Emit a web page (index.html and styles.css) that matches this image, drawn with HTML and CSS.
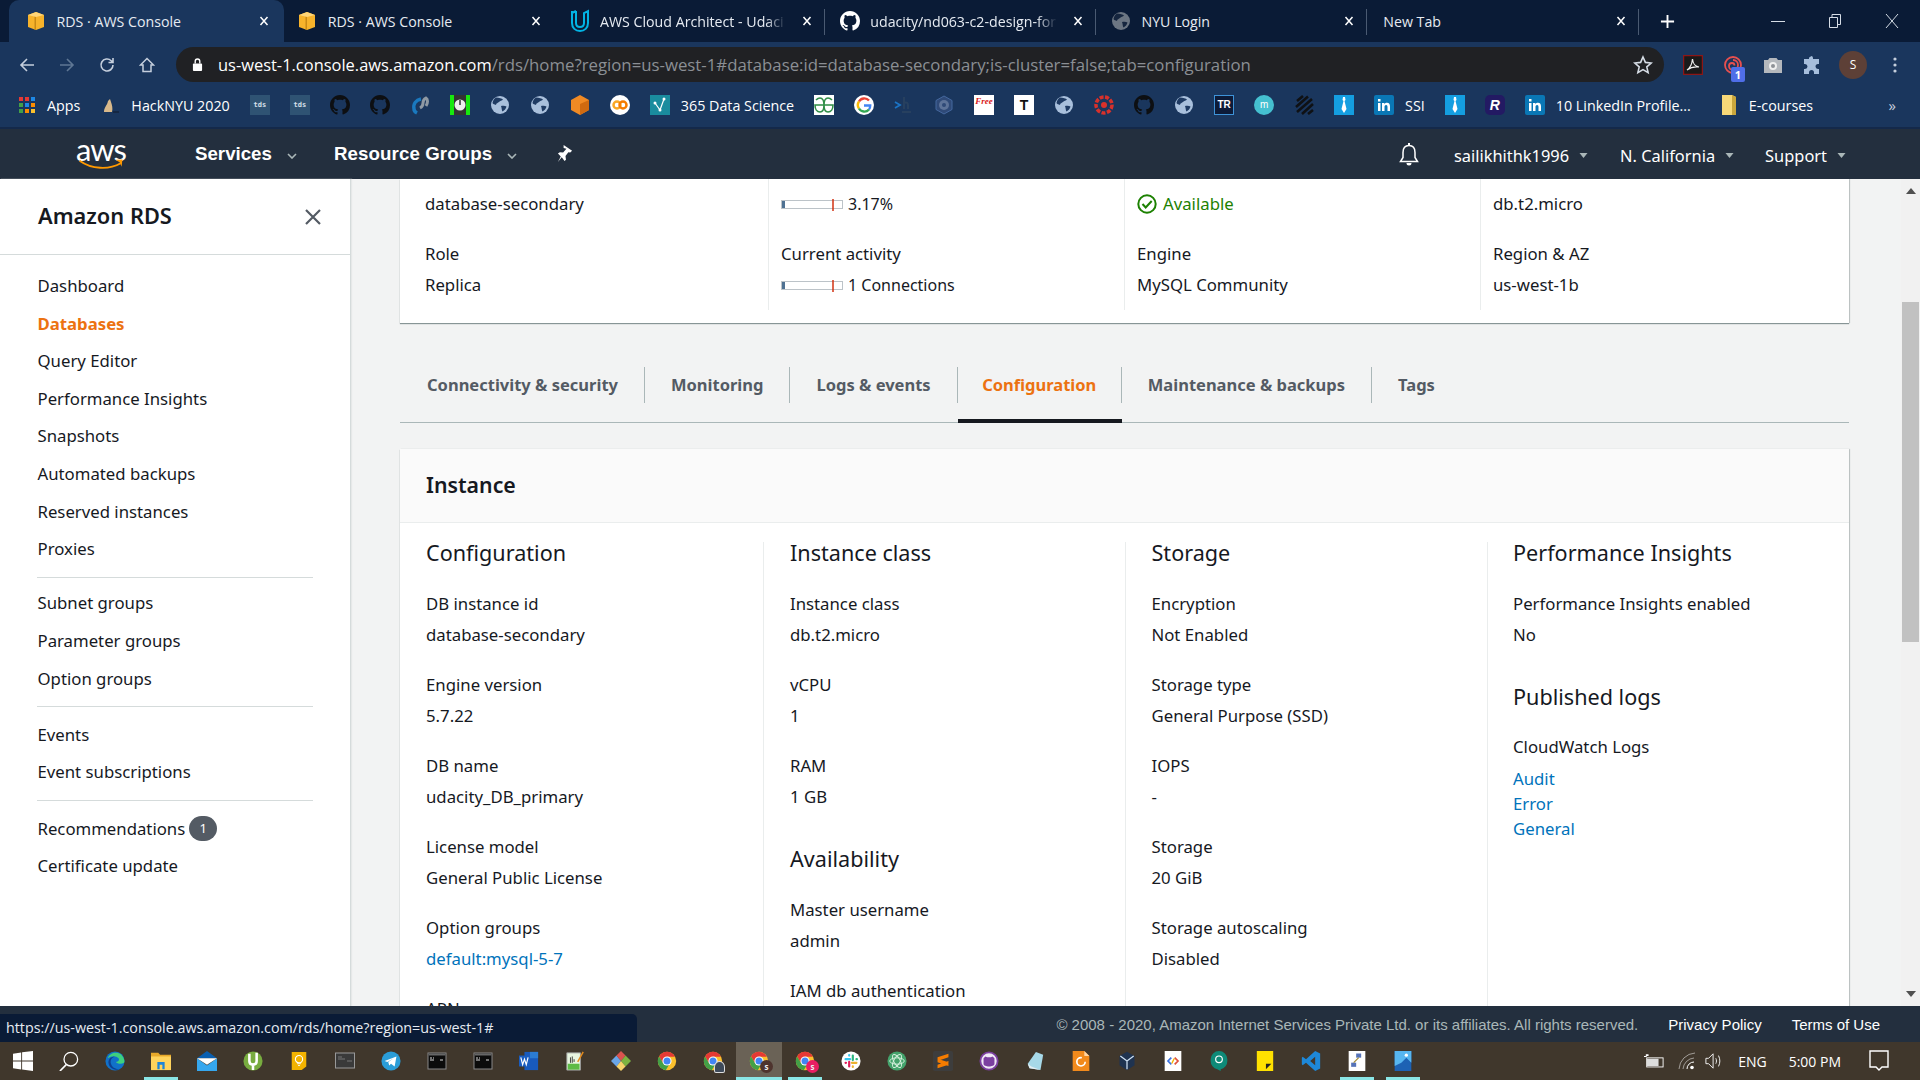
FILE: index.html
```html
<!DOCTYPE html>
<html lang="en">
<head>
<meta charset="utf-8">
<title>RDS · AWS Console</title>
<link rel="stylesheet" href="styles.css">
</head>
<body>
<svg class="defs" xmlns="http://www.w3.org/2000/svg">
  <symbol id="cube" viewBox="0 0 20 20"><path fill="#f7b32b" d="M10 1l8 3v12l-8 3-8-3V4z"/><path fill="#c98a16" d="M10 5v14l-1.500-.5V5z"/><path fill="#ffd577" d="M2 4l8-3 8 3-8 2z"/></symbol>
  <symbol id="udacity" viewBox="0 0 20 24"><path fill="none" stroke="#02b3e4" stroke-width="2" d="M2 2v12c0 5 3.500 8 8 8s8-3 8-8V2l-4 2v10c0 3-1.500 4-4 4M6 2l-4 2M6 2v12c0 2.500 1.500 4 4 4"/></symbol>
  <symbol id="gh" viewBox="0 0 16 16"><path d="M8 0C3.580 0 0 3.580 0 8c0 3.540 2.290 6.530 5.470 7.590.4.070.55-.17.55-.38 0-.19-.01-.82-.01-1.490-2.010.37-2.530-.49-2.690-.94-.09-.23-.48-.94-.82-1.130-.28-.15-.68-.52-.01-.53.63-.01 1.080.58 1.230.82.72 1.210 1.870.87 2.330.66.070-.52.28-.87.51-1.070-1.780-.2-3.640-.89-3.640-3.950 0-.87.31-1.590.82-2.150-.08-.2-.36-1.020.08-2.120 0 0 .67-.21 2.200.82.64-.18 1.320-.27 2-.27.68 0 1.360.09 2 .27 1.530-1.040 2.200-.82 2.200-.82.44 1.100.16 1.920.08 2.120.51.56.82 1.270.82 2.150 0 3.070-1.870 3.750-3.650 3.950.29.25.54.73.54 1.480 0 1.070-.01 1.930-.01 2.200 0 .21.15.46.55.38A8.013 8.013 0 0016 8c0-4.420-3.580-8-8-8z"/></symbol>
  <symbol id="globe" viewBox="0 0 20 20"><circle cx="10" cy="10" r="9" fill="#a9c0dc"/><path fill="#1f3b63" d="M6 2.500c3 .5 6 .5 7 2-1 1.500-3 1-4 2.500-1 1-3 1-3 3-1.500-.5-3-1-3.500-2 .5-2.500 1.500-4.500 3.500-5.500zM11 11c2-.5 4-.5 5.500.5-.5 2-2 4-4 5-1-1-.5-3-1.500-5.500z"/></symbol>
  <symbol id="globe-dim" viewBox="0 0 20 20"><circle cx="10" cy="10" r="9" fill="#6c7683"/><path fill="#16263f" d="M6 2.500c3 .5 6 .5 7 2-1 1.500-3 1-4 2.500-1 1-3 1-3 3-1.500-.5-3-1-3.500-2 .5-2.500 1.500-4.500 3.500-5.500zM11 11c2-.5 4-.5 5.500.5-.5 2-2 4-4 5-1-1-.5-3-1.500-5.500z"/></symbol>
  <symbol id="chrome" viewBox="0 0 24 24"><circle cx="12" cy="12" r="11" fill="#fbc02d"/><path fill="#e53935" d="M12 1a11 11 0 00-9.500 5.500L7 14l5-7h9.500A11 11 0 0012 1z"/><path fill="#43a047" d="M2.500 6.500A11 11 0 0010.500 23l4.500-7.500L7 14z"/><circle cx="12" cy="12" r="5.500" fill="#fff"/><circle cx="12" cy="12" r="4.200" fill="#4285f4"/></symbol>
  <symbol id="cmd" viewBox="0 0 20 20"><rect x="1" y="2" width="18" height="16" fill="#0b0b0b" stroke="#888" stroke-width="1"/><rect x="1.500" y="2.500" width="17" height="2" fill="#666"/><path stroke="#ddd" stroke-width="1" d="M3 7h2M6 7h1M3 9h4M13 9h3"/></symbol>
  <symbol id="inbox" viewBox="0 0 20 20"><rect x="0" y="0" width="20" height="20" rx="2" fill="#0a77b5"/><path fill="#fff" d="M4 8h2.500v8H4zM4 4h2.500v2.500H4zM8 8h2.400v1.200c.6-.9 1.500-1.400 2.600-1.400 2.200 0 3 1.500 3 3.600V16h-2.500v-4c0-1.200-.4-2-1.400-2s-1.600.8-1.600 2v4H8z"/></symbol>
  <symbol id="tie" viewBox="0 0 20 20"><rect width="20" height="20" fill="#149ee0"/><path fill="#fff" d="M9 2h2l.5 3-1 1 2 8-2.500 4-2.500-4 2-8-1-1z"/></symbol>
  <symbol id="chev" viewBox="0 0 10 6"><path fill="none" stroke="currentColor" stroke-width="1.600" d="M1 1l4 4 4-4"/></symbol>
  <symbol id="tri" viewBox="0 0 8 5"><path fill="currentColor" d="M0 0h8L4 5z"/></symbol>
  <symbol id="x" viewBox="0 0 10 10"><path fill="none" stroke="#fff" stroke-width="1.500" d="M1.500 1l7 8M8.500 1l-7 8"/></symbol>
</svg>

<div class="page">
  <div class="tabstrip">
    <div class="tab tab-active"><svg class="tab-ico"><use href="#cube"/></svg><span class="tab-title">RDS · AWS Console</span><svg class="tab-x"><use href="#x"/></svg></div>
    <div class="tab"><svg class="tab-ico"><use href="#cube"/></svg><span class="tab-title">RDS · AWS Console</span><svg class="tab-x"><use href="#x"/></svg></div>
    <div class="tab"><svg class="tab-ico tab-ico-u"><use href="#udacity"/></svg><span class="tab-title tab-fade">AWS Cloud Architect - Udaci</span><svg class="tab-x"><use href="#x"/></svg></div>
    <div class="tab"><svg class="tab-ico ico-white"><use href="#gh"/></svg><span class="tab-title tab-fade">udacity/nd063-c2-design-for</span><svg class="tab-x"><use href="#x"/></svg></div>
    <div class="tab"><svg class="tab-ico"><use href="#globe-dim"/></svg><span class="tab-title">NYU Login</span><svg class="tab-x"><use href="#x"/></svg></div>
    <div class="tab tab-plain"><span class="tab-title">New Tab</span><svg class="tab-x"><use href="#x"/></svg></div>
    <svg class="newtab" viewBox="0 0 16 16"><path stroke="#fff" stroke-width="2" d="M8 1v14M1 8h14"/></svg>
    <div class="winbtns">
      <svg viewBox="0 0 14 14"><path stroke="#d6dde6" stroke-width="1" d="M0 7.500h14"/></svg>
      <svg viewBox="0 0 14 14"><path fill="none" stroke="#d6dde6" stroke-width="1" d="M1.500 3.500h8v10h-8zM4 3.500V.5h8.500v10h-3"/></svg>
      <svg viewBox="0 0 14 14"><path stroke="#d6dde6" stroke-width="1" d="M1 0l12 14M13 0L1 14"/></svg>
    </div>
  </div>

  <div class="toolbar">
    <div class="navbtns">
      <svg viewBox="0 0 16 16"><path fill="none" stroke="#c5cfdd" stroke-width="1.600" d="M15 8H2M8 2L2 8l6 6"/></svg>
      <svg viewBox="0 0 16 16"><path fill="none" stroke="#5f7794" stroke-width="1.600" d="M1 8h13M8 2l6 6-6 6"/></svg>
      <svg viewBox="0 0 16 16"><path fill="none" stroke="#c5cfdd" stroke-width="1.600" d="M14 8a6 6 0 11-1.800-4.300L14 5.500M14 1v4.500H9.500"/></svg>
      <svg viewBox="0 0 16 16"><path fill="none" stroke="#c5cfdd" stroke-width="1.500" d="M8 1.500L1.500 8H4v6.500h8V8h2.500z"/></svg>
    </div>
    <div class="omnibox">
      <svg class="lock" viewBox="0 0 12 16"><path fill="#fff" d="M2 7h8a1 1 0 011 1v6a1 1 0 01-1 1H2a1 1 0 01-1-1V8a1 1 0 011-1z"/><path fill="none" stroke="#fff" stroke-width="1.500" d="M3.500 7V4.500a2.500 2.500 0 015 0V7"/></svg>
      <span class="url"><span class="url-host">us-west-1.console.aws.amazon.com</span>/rds/home?region=us-west-1#database:id=database-secondary;is-cluster=false;tab=configuration</span>
      <svg class="star" viewBox="0 0 20 20"><path fill="none" stroke="#d6dde6" stroke-width="1.600" d="M10 2l2.400 5.400 5.800.6-4.400 3.900 1.300 5.700L10 14.600l-5.100 3 1.300-5.700L1.800 8l5.800-.6z"/></svg>
    </div>
    <div class="exts">
      <svg class="ext" viewBox="0 0 20 20"><rect x=".5" y=".5" width="19" height="19" fill="#1a1a1a" stroke="#8c1616" stroke-width="1.500"/><path fill="none" stroke="#f0f0f0" stroke-width="1.200" d="M4 15c3-2 5-6 5.500-11 .5 5 2 7 6.500 8-4-.5-8 0-12 3z"/></svg>
      <span class="ext ext-swirl"><svg viewBox="0 0 20 20"><g fill="none" stroke="#e8504f" stroke-width="1.800"><circle cx="10" cy="10" r="8"/><path d="M10 5a5 5 0 015 5c0 3-2 5-5 5a4 4 0 01-4-4c0-2 1.500-3 3-3s2.500 1 2.500 2.500"/></g></svg><span class="ext-badge">1</span></span>
      <svg class="ext" viewBox="0 0 20 20"><path fill="#b4b8bd" d="M1 5h4l1.500-2h7L15 5h4v13H1z"/><circle cx="10" cy="11" r="4" fill="#efefef"/><circle cx="10" cy="11" r="2" fill="#8e9297"/></svg>
      <svg class="ext" viewBox="0 0 20 20"><path fill="#a6bedc" d="M8 1a2 2 0 012 2v1h6v5h-1a2.500 2.500 0 000 5h1v5h-5v-1.500a2.500 2.500 0 00-5 0V19H1v-5h1a2.500 2.500 0 000-5H1V4h5V3a2 2 0 012-1.500z"/></svg>
      <span class="avatar">S</span>
      <svg class="dots" viewBox="0 0 4 16"><circle cx="2" cy="2" r="1.600" fill="#c5cfdd"/><circle cx="2" cy="8" r="1.600" fill="#c5cfdd"/><circle cx="2" cy="14" r="1.600" fill="#c5cfdd"/></svg>
    </div>
  </div>

  <div class="bookmarks">
    <div class="bm bm-apps"><svg class="bm-ico" viewBox="0 0 18 18"><g fill="#e53935"><rect x="1" y="1" width="4" height="4"/><rect x="7" y="1" width="4" height="4"/></g><rect x="13" y="1" width="4" height="4" fill="#1e88e5"/><rect x="1" y="7" width="4" height="4" fill="#43a047"/><rect x="7" y="7" width="4" height="4" fill="#1e88e5"/><rect x="13" y="7" width="4" height="4" fill="#fb8c00"/><rect x="1" y="13" width="4" height="4" fill="#43a047"/><rect x="7" y="13" width="4" height="4" fill="#fb8c00"/><rect x="13" y="13" width="4" height="4" fill="#fbc02d"/></svg><span>Apps</span></div>
    <div class="bm"><svg class="bm-ico" viewBox="0 0 20 20"><path fill="#d9b98a" d="M4 17c0-5 3-6 4-11l2-2 1 3c1 3 2 6 1 10z"/><path stroke="#14233b" stroke-width="1.500" d="M13 17h6"/></svg><span>HackNYU 2020</span></div>
    <div class="bm"><span class="tds">tds</span></div>
    <div class="bm"><span class="tds">tds</span></div>
    <div class="bm"><svg class="bm-ico ico-black"><use href="#gh"/></svg></div>
    <div class="bm"><svg class="bm-ico ico-black"><use href="#gh"/></svg></div>
    <div class="bm"><svg class="bm-ico" viewBox="0 0 20 20"><path fill="none" stroke="#1a79bf" stroke-width="3.500" d="M11 4c-5 1-8 5-7 10 0 2 1 3 3 4"/><path fill="none" stroke="#8f99a3" stroke-width="3" d="M10 13c2-1 3-2 3-5 0-2 1-4 3-5 2 1 2 5 0 8"/></svg></div>
    <div class="bm"><svg class="bm-ico" viewBox="0 0 20 20"><rect width="20" height="20" fill="#17e80f"/><rect x="4" width="12" height="20" fill="#333"/><circle cx="10" cy="10" r="5.500" fill="#eee"/><path stroke="#333" stroke-width="1.500" d="M10 5v5"/></svg></div>
    <div class="bm"><svg class="bm-ico"><use href="#globe"/></svg></div>
    <div class="bm"><svg class="bm-ico"><use href="#globe"/></svg></div>
    <div class="bm"><svg class="bm-ico" viewBox="0 0 20 20"><path fill="#f08a24" d="M10 0l9 5v10l-9 5-9-5V5z"/><path fill="#d06a10" d="M10 9v11l9-5V5z"/></svg></div>
    <div class="bm"><svg class="bm-ico" viewBox="0 0 20 20"><circle cx="10" cy="10" r="10" fill="#fff"/><circle cx="7" cy="10" r="3.500" fill="none" stroke="#f9a825" stroke-width="2.500"/><circle cx="13" cy="10" r="3.500" fill="none" stroke="#f57c00" stroke-width="2.500"/></svg></div>
    <div class="bm"><svg class="bm-ico" viewBox="0 0 20 20"><rect width="20" height="20" fill="#1a8c9e"/><path fill="none" stroke="#fff" stroke-width="1.200" d="M5 8l5 7 4-11"/><circle cx="5" cy="8" r="1.500" fill="#fff"/><circle cx="10" cy="15" r="1.500" fill="#fff"/><circle cx="14" cy="4" r="1.500" fill="#fff"/></svg><span>365 Data Science</span></div>
    <div class="bm"><svg class="bm-ico" viewBox="0 0 20 20"><rect width="20" height="20" fill="#fff"/><g fill="none" stroke="#2f8d46" stroke-width="1.600"><path d="M10 10h9c0 4-2 7-5 7-2.500 0-4-3-4-7zM10 10H1c0 4 2 7 5 7 2.500 0 4-3 4-7z"/><path d="M10 10c0-4 1.500-7 4-7 2 0 3 1 4 2M10 10c0-4-1.500-7-4-7-2 0-3 1-4 2"/></g></svg></div>
    <div class="bm"><svg class="bm-ico" viewBox="0 0 20 20"><circle cx="10" cy="10" r="10" fill="#fff"/><path fill="none" stroke="#ea4335" stroke-width="2.400" d="M15 5.500A6.200 6.200 0 005 6.500"/><path fill="none" stroke="#fbbc05" stroke-width="2.400" d="M5 6.500a6.200 6.200 0 000 7"/><path fill="none" stroke="#34a853" stroke-width="2.400" d="M5 13.500a6.200 6.200 0 0010 1"/><path fill="none" stroke="#4285f4" stroke-width="2.400" d="M15 14.500c1-1 1.200-2.500 1.200-4H10"/></svg></div>
    <div class="bm"><svg class="bm-ico" viewBox="0 0 20 20"><path fill="none" stroke="#1b74c5" stroke-width="1.800" d="M1 7l5 3-5 3"/><path fill="none" stroke="#27405f" stroke-width="2" d="M10 2v12M10 8c3-1 4 0 4 2v4M8 17h9"/></svg></div>
    <div class="bm"><svg class="bm-ico" viewBox="0 0 20 20"><path fill="#2f4a78" stroke="#45689f" d="M10 1l8 4.500v9L10 19l-8-4.500v-9z"/><circle cx="10" cy="10" r="5" fill="#5d7399"/><circle cx="10" cy="10" r="2" fill="#2f4a78"/></svg></div>
    <div class="bm"><span class="free">Free</span></div>
    <div class="bm"><span class="tee">T</span></div>
    <div class="bm"><svg class="bm-ico"><use href="#globe"/></svg></div>
    <div class="bm"><svg class="bm-ico" viewBox="0 0 20 20"><circle cx="10" cy="10" r="8" fill="none" stroke="#d9312b" stroke-width="3.500" stroke-dasharray="4 1.500"/><circle cx="10" cy="10" r="3" fill="#d9312b"/></svg></div>
    <div class="bm"><svg class="bm-ico ico-black"><use href="#gh"/></svg></div>
    <div class="bm"><svg class="bm-ico"><use href="#globe"/></svg></div>
    <div class="bm"><span class="tr">TR</span></div>
    <div class="bm"><span class="mm">m</span></div>
    <div class="bm"><svg class="bm-ico" viewBox="0 0 20 20"><g stroke="#0f1114" stroke-width="2.600"><path d="M3 6l6-5M2 12L14 1.500M3 17L18 4M8 19l11-10M14 19l5-4"/></g></svg></div>
    <div class="bm"><svg class="bm-ico"><use href="#tie"/></svg></div>
    <div class="bm"><svg class="bm-ico"><use href="#inbox"/></svg><span>SSI</span></div>
    <div class="bm"><svg class="bm-ico"><use href="#tie"/></svg></div>
    <div class="bm"><span class="rr">R</span></div>
    <div class="bm"><svg class="bm-ico"><use href="#inbox"/></svg><span>10 LinkedIn Profile...</span></div>
    <div class="bm bm-folder"><svg class="bm-ico" viewBox="0 0 16 20"><path fill="#f6d878" d="M1 0h10l4 2v18H1z"/><path fill="#c9a63c" d="M11 0v20h4V2z"/></svg><span>E-courses</span></div>
    <span class="bm-more">»</span>
  </div>

  <nav class="awsnav">
    <div class="aws-logo"><span class="aws-word">aws</span><svg class="aws-smile" viewBox="0 0 52 14"><path fill="none" stroke="#f90" stroke-width="2.200" d="M1 2c14 10 34 11 48 3"/><path fill="#f90" d="M43 1l8-.5L50 9l-2-5z"/></svg></div>
    <span class="nav-main">Services</span><svg class="nav-chev"><use href="#chev"/></svg>
    <span class="nav-main nav-rg">Resource Groups</span><svg class="nav-chev"><use href="#chev"/></svg>
    <svg class="pin" viewBox="0 0 18 20"><path fill="#fff" d="M7 0l9 6-2 2-2-.5-3 4 .5 4L8 17l-3-4-4 5 3-6-3-3 2-1.500 3.500.5L10 4 7 3z" /></svg>
    <div class="nav-right">
      <svg class="bell" viewBox="0 0 20 24"><path fill="none" stroke="#fff" stroke-width="1.500" d="M10 2.500c-4 0-6 3-6 7v5l-2.500 4h17L16 14.500v-5c0-4-2-7-6-7z"/><path fill="#fff" d="M7.500 20h5a2.500 2.500 0 01-5 0zM9 0h2v3H9z"/></svg>
      <span class="nav-item nav-user">sailikhithk1996<svg class="nav-tri"><use href="#tri"/></svg></span>
      <span class="nav-item nav-region">N. California<svg class="nav-tri"><use href="#tri"/></svg></span>
      <span class="nav-item nav-support">Support<svg class="nav-tri"><use href="#tri"/></svg></span>
    </div>
  </nav>

  <div class="work">
    <aside class="sidebar">
      <div class="side-head"><h2 class="side-title">Amazon RDS</h2><svg class="side-x" viewBox="0 0 16 16"><path stroke="#545b64" stroke-width="2.200" d="M1 1l14 14M15 1L1 15"/></svg></div>
      <ul class="side-list side-first">
        <li>Dashboard</li>
        <li class="side-on">Databases</li>
        <li>Query Editor</li>
        <li>Performance Insights</li>
        <li>Snapshots</li>
        <li>Automated backups</li>
        <li>Reserved instances</li>
        <li>Proxies</li>
      </ul>
      <ul class="side-list side-group">
        <li>Subnet groups</li>
        <li>Parameter groups</li>
        <li>Option groups</li>
      </ul>
      <ul class="side-list side-group">
        <li>Events</li>
        <li>Event subscriptions</li>
      </ul>
      <ul class="side-list side-group">
        <li>Recommendations<span class="side-badge">1</span></li>
        <li>Certificate update</li>
      </ul>
    </aside>

    <main class="main">
      <section class="summary">
        <div class="sum-cell sum-first">
          <div class="row val sum-gap">database-secondary</div>
          <div class="row">Role</div>
          <div class="row">Replica</div>
        </div>
        <div class="sum-cell">
          <div class="row sum-gap meter-row"><span class="meter"><i class="meter-fill"></i><i class="meter-tick"></i></span><span class="meter-txt">3.17%</span></div>
          <div class="row">Current activity</div>
          <div class="row meter-row"><span class="meter"><i class="meter-fill"></i><i class="meter-tick"></i></span><span class="meter-txt meter-conn">1 Connections</span></div>
        </div>
        <div class="sum-cell">
          <div class="row sum-gap status"><svg class="ok" viewBox="0 0 20 20"><circle cx="10" cy="10" r="8.700" fill="none" stroke="#1d8102" stroke-width="2"/><path fill="none" stroke="#1d8102" stroke-width="2" d="M5.500 10l3.200 3.500 6-6.500"/></svg><span class="status-txt">Available</span></div>
          <div class="row">Engine</div>
          <div class="row">MySQL Community</div>
        </div>
        <div class="sum-cell">
          <div class="row sum-gap">db.t2.micro</div>
          <div class="row">Region &amp; AZ</div>
          <div class="row">us-west-1b</div>
        </div>
      </section>

      <div class="tabs">
        <a class="dtab">Connectivity &amp; security</a>
        <a class="dtab">Monitoring</a>
        <a class="dtab">Logs &amp; events</a>
        <a class="dtab dtab-on">Configuration</a>
        <a class="dtab">Maintenance &amp; backups</a>
        <a class="dtab dtab-last">Tags</a>
      </div>

      <section class="card">
        <h2 class="card-head">Instance</h2>
        <div class="cols">
          <div class="col">
            <h3 class="col-h">Configuration</h3>
            <div class="kv"><div class="row">DB instance id</div><div class="row">database-secondary</div></div>
            <div class="kv"><div class="row">Engine version</div><div class="row">5.7.22</div></div>
            <div class="kv"><div class="row">DB name</div><div class="row">udacity_DB_primary</div></div>
            <div class="kv"><div class="row">License model</div><div class="row">General Public License</div></div>
            <div class="kv"><div class="row">Option groups</div><div class="row link">default:mysql-5-7</div></div>
            <div class="kv"><div class="row">ARN</div></div>
          </div>
          <div class="col">
            <h3 class="col-h">Instance class</h3>
            <div class="kv"><div class="row">Instance class</div><div class="row">db.t2.micro</div></div>
            <div class="kv"><div class="row">vCPU</div><div class="row">1</div></div>
            <div class="kv"><div class="row">RAM</div><div class="row">1 GB</div></div>
            <h3 class="col-h col-h2">Availability</h3>
            <div class="kv"><div class="row">Master username</div><div class="row">admin</div></div>
            <div class="kv"><div class="row">IAM db authentication</div></div>
          </div>
          <div class="col col-3">
            <h3 class="col-h">Storage</h3>
            <div class="kv"><div class="row">Encryption</div><div class="row">Not Enabled</div></div>
            <div class="kv"><div class="row">Storage type</div><div class="row">General Purpose (SSD)</div></div>
            <div class="kv"><div class="row">IOPS</div><div class="row">-</div></div>
            <div class="kv"><div class="row">Storage</div><div class="row">20 GiB</div></div>
            <div class="kv"><div class="row">Storage autoscaling</div><div class="row">Disabled</div></div>
          </div>
          <div class="col col-4">
            <h3 class="col-h">Performance Insights</h3>
            <div class="kv"><div class="row">Performance Insights enabled</div><div class="row">No</div></div>
            <h3 class="col-h col-h3">Published logs</h3>
            <div class="row row-logs">CloudWatch Logs</div>
            <div class="loglink link">Audit</div>
            <div class="loglink link">Error</div>
            <div class="loglink link">General</div>
          </div>
        </div>
      </section>
    </main>

    <div class="scrollbar">
      <svg class="sb-arrow" viewBox="0 0 10 6"><path fill="#505050" d="M5 0l5 6H0z"/></svg>
      <div class="sb-thumb"></div>
      <svg class="sb-arrow sb-down" viewBox="0 0 10 6"><path fill="#505050" d="M5 6l5-6H0z"/></svg>
    </div>
  </div>

  <footer class="footer">
    <span class="foot-copy">© 2008 - 2020, Amazon Internet Services Private Ltd. or its affiliates. All rights reserved.</span>
    <span class="foot-link">Privacy Policy</span>
    <span class="foot-link">Terms of Use</span>
    <div class="statusbubble">https://us-west-1.console.aws.amazon.com/rds/home?region=us-west-1#</div>
  </footer>

  <div class="taskbar">
    <div class="tb"><svg viewBox="0 0 22 22"><path fill="#fff" d="M0 3l9-1.300V10.500H0zM10 1.500L22 0v10.500H10zM0 11.500h9v8.800L0 19zM10 11.500h12V22l-12-1.700z"/></svg></div>
    <div class="tb"><svg viewBox="0 0 22 22"><circle cx="13" cy="9" r="7.500" fill="none" stroke="#fff" stroke-width="1.400"/><path stroke="#fff" stroke-width="1.800" d="M8 15l-7 7"/></svg></div>
    <div class="tb"><svg viewBox="0 0 22 22"><circle cx="11" cy="11" r="10.500" fill="#1171c9"/><path fill="#3ed07e" d="M3 8c2-6 10-8 15-4 3 3 4 7 3 9-3 2-8 1-9-1 3 0 4-2 3-4-3-3-8-3-12 0z"/><path fill="#0f3f8f" d="M11 6C7 7 5 11 7 15c1 3 5 5 9 5-5 2-11-1-12-6-1-4 2-8 7-8z"/></svg></div>
    <div class="tb tb-run"><svg viewBox="0 0 22 22"><path fill="#e8a92a" d="M0 2h8l2 2h12v5H0z"/><path fill="#ffd35c" d="M0 6h22v15H0z"/><path fill="#1d85d8" d="M7 12h8v8h-2.500v-5h-3v5H7z"/></svg></div>
    <div class="tb"><svg viewBox="0 0 22 22"><path fill="#0a5fb0" d="M11 0l11 8H0z"/><path fill="#36a7ee" d="M0 8v14h22V8l-11 8z"/><path fill="#fff" d="M0 8h22l-11 7z"/></svg></div>
    <div class="tb"><svg viewBox="0 0 22 22"><circle cx="11" cy="11" r="10.500" fill="#78ac3f"/><path fill="none" stroke="#fff" stroke-width="2.800" d="M7 3v8c0 3 2 4 4 4s4-1 4-4V2M11 15v6"/></svg></div>
    <div class="tb"><svg viewBox="0 0 18 22"><path fill="#f3b300" d="M1 1h16v16l-5 4H1z"/><circle cx="9" cy="9" r="4" fill="none" stroke="#fff" stroke-width="1.200"/><path stroke="#fff" d="M7 14h4M8 16h2"/></svg></div>
    <div class="tb"><svg viewBox="0 0 20 20"><rect x=".5" y="2" width="19" height="15" fill="#3a3a3a" stroke="#999"/><path stroke="#777" d="M3 6h4M3 8h7M12 10h5"/></svg></div>
    <div class="tb"><svg viewBox="0 0 22 22"><circle cx="11" cy="11" r="10.500" fill="#2a9dd8"/><path fill="#fff" d="M4 11l13-5-2 11-4-3-2 2-1-4 6-4-7 4z"/></svg></div>
    <div class="tb"><svg><use href="#cmd"/></svg></div>
    <div class="tb"><svg><use href="#cmd"/></svg></div>
    <div class="tb"><svg viewBox="0 0 22 22"><path fill="#185abd" d="M6 1h15v20H6z"/><path fill="#2b7cd3" d="M12 1h9v7h-9z"/><rect y="5" width="12" height="12" fill="#1a5dc0"/><path fill="none" stroke="#fff" stroke-width="1.300" d="M2 7l2 8 2-6 2 6 2-8"/></svg></div>
    <div class="tb"><svg viewBox="0 0 22 22"><path fill="#e8f5e0" stroke="#999" d="M2 2h15v19H2z"/><path fill="#5dbb46" d="M3 14h13v6.500H3z"/><path stroke="#333" d="M6 7v6M8 6v7M10 9v3"/><path stroke="#e28a1c" stroke-width="1.600" d="M14 12L20 1"/></svg></div>
    <div class="tb"><svg viewBox="0 0 22 22"><path fill="#6aa6e8" d="M0 11l6-6 5 6-5 6z"/><path fill="#d9534f" d="M6 5l5-5 5 5-5 6z"/><path fill="#7cb342" d="M11 11l5-6 6 6-6 6z"/><path fill="#f6d36b" d="M6 17l5-6 5 6-5 5z"/></svg></div>
    <div class="tb"><svg><use href="#chrome"/></svg></div>
    <div class="tb tb-badged"><svg><use href="#chrome"/></svg><span class="tb-face"></span></div>
    <div class="tb tb-run tb-active tb-badged"><svg><use href="#chrome"/></svg><span class="tb-s">s</span></div>
    <div class="tb tb-run tb-badged"><svg><use href="#chrome"/></svg><span class="tb-s tb-s-pink">s</span></div>
    <div class="tb"><svg viewBox="0 0 22 22"><circle cx="11" cy="11" r="10.500" fill="#fff"/><g stroke-width="2.400" stroke-linecap="round"><path stroke="#36c5f0" d="M5 9h5M9 4.500v.5"/><path stroke="#2eb67d" d="M13 5v5M17 9h.5"/><path stroke="#ecb22e" d="M12 13h5M13 17v.5"/><path stroke="#e01e5a" d="M9 12v5M5 13h.5"/></g></svg></div>
    <div class="tb"><svg viewBox="0 0 22 22"><circle cx="11" cy="11" r="10.500" fill="#44a36c"/><g fill="none" stroke="#d8f1df" stroke-width="1"><ellipse cx="11" cy="11" rx="8" ry="3.500"/><ellipse cx="11" cy="11" rx="8" ry="3.500" transform="rotate(60 11 11)"/><ellipse cx="11" cy="11" rx="8" ry="3.500" transform="rotate(120 11 11)"/></g></svg></div>
    <div class="tb"><svg viewBox="0 0 22 22"><rect width="22" height="22" rx="2" fill="#3d3d3d"/><path fill="#f57c00" d="M5 7l12-4v4L5 11zM5 8.500l12 4v4L5 12.500zM5 15l12-4v4L5 19z"/></svg></div>
    <div class="tb"><svg viewBox="0 0 22 22"><circle cx="11" cy="11" r="9.500" fill="#efe8f5" stroke="#7b3fa0" stroke-width="2"/><path fill="#7b3fa0" d="M5 8l2-2 2 1h4l2-1 2 2v6c0 2-3 3-6 3s-6-1-6-3z"/></svg></div>
    <div class="tb"><svg viewBox="0 0 22 22"><path fill="#a7d9e8" d="M3 14L12 1l8 3-3 17-12-2z"/><path fill="#e4eef2" d="M3 14l2 5 12 2-10-4z"/></svg></div>
    <div class="tb"><svg viewBox="0 0 20 24"><path fill="#f28a1c" d="M0 0h14l6 6v18H0z"/><path fill="#ffd6a6" d="M14 0l6 6h-6z"/><circle cx="10" cy="13" r="5" fill="none" stroke="#fff" stroke-width="2" stroke-dasharray="24 7"/></svg></div>
    <div class="tb"><svg viewBox="0 0 22 24"><path fill="#1f3350" d="M11 1l9 5v11l-9 6-9-6V6z"/><path fill="none" stroke="#cfe1f3" stroke-width="1.500" d="M3 6l8 6 8-6M11 12v10"/></svg></div>
    <div class="tb"><svg viewBox="0 0 20 24"><rect width="20" height="24" fill="#fff"/><path fill="none" stroke="#3b72e0" stroke-width="2" d="M8 8l-4 4 4 4"/><path fill="none" stroke="#e0503b" stroke-width="2" d="M12 8l4 4-4 4"/><path stroke="#f4b400" stroke-width="1.600" d="M8.500 15l3-6"/></svg></div>
    <div class="tb"><svg viewBox="0 0 20 24"><path fill="#0e8a78" d="M10 0a10 10 0 0110 10v2a10 10 0 01-8 10v2l-4-2a10 10 0 01-8-10v-2A10 10 0 0110 0z"/><circle cx="10" cy="10" r="4" fill="none" stroke="#fff" stroke-width="1.400"/></svg></div>
    <div class="tb"><svg viewBox="0 0 18 22"><path fill="#ffe100" d="M0 0h18v22H0z"/><path fill="#222" d="M10 14h6l-6 6z"/></svg></div>
    <div class="tb"><svg viewBox="0 0 22 24"><path fill="#1e88d8" d="M16 0l6 3v18l-6 3L5 14l-4 3-1-1V8l1-1 4 3zM16 7l-6 5 6 5z"/></svg></div>
    <div class="tb tb-run"><svg viewBox="0 0 20 24"><rect width="20" height="24" fill="#fff"/><rect x="9" y="3" width="6" height="5" fill="#5673b8"/><rect x="3" y="14" width="6" height="5" fill="#5673b8"/><path stroke="#a08a35" stroke-width="1.500" d="M12 8l-6 6"/></svg></div>
    <div class="tb tb-run"><svg viewBox="0 0 20 24"><rect width="20" height="24" fill="#1d62b4"/><path fill="#57b6f0" d="M0 0h20v14L14 8 8 14 0 18z"/><circle cx="14" cy="5" r="2" fill="#fff"/></svg></div>
    <div class="tray">
      <svg class="tray-bat" viewBox="0 0 22 16"><path fill="#fff" d="M2 0h3v2H2zM0 2h3v1H0z"/><rect x="3" y="4" width="18" height="10" fill="none" stroke="#fff"/><rect x="3" y="5" width="13" height="8" fill="#ddd"/></svg>
      <svg class="tray-wifi" viewBox="0 0 20 18"><g fill="none" stroke="#fff"><path d="M2 17a17 17 0 0116-16" opacity=".5"/><path d="M6 17A12 12 0 0117 6" opacity=".5"/><path d="M10 17a7 7 0 017-7" /></g><circle cx="15" cy="15.500" r="1.800" fill="#fff"/></svg>
      <svg class="tray-vol" viewBox="0 0 20 20"><path fill="none" stroke="#fff" d="M1 7h3l5-5v16l-5-5H1z"/><path fill="none" stroke="#fff" d="M12 7c1 2 1 4 0 6M15 4c2 4 2 8 0 12" /></svg>
      <span class="tray-eng">ENG</span>
      <span class="tray-time">5:00 PM</span>
      <svg class="tray-note" viewBox="0 0 20 22"><path fill="none" stroke="#fff" stroke-width="1.400" d="M1 1h18v16h-6l-3 3-3-3H1z"/></svg>
    </div>
  </div>
</div>
</body>
</html>
```

FILE: styles.css
```css
* { box-sizing: border-box; }
html, body { margin: 0; height: 100%; overflow: hidden; }
body { font-family: "Noto Sans", "Open Sans", sans-serif; color: #16191f; background: #f2f3f3; }
h2, h3, ul { margin: 0; padding: 0; }
.defs { display: none; }
.page { width: 1920px; height: 1080px; display: flex; flex-direction: column; overflow: hidden; }
.ico-white { fill: #fff; }
.ico-black { fill: #0d0f12; }

/* tab strip */
.tabstrip { height: 42px; background: #0a1b36; display: flex; align-items: stretch; padding-left: 11px; font-family: "Open Sans", sans-serif; font-size: 14.200px; color: #e6ebf2; position: relative; }
.tab { width: 271.250px; display: flex; align-items: center; padding: 0 13px 0 15px; position: relative; white-space: nowrap; }
.tab::after { content: ""; position: absolute; right: 0; top: 9px; height: 26px; width: 1px; background: #4a5a72; }
.tab:first-child::after, .tab:nth-child(2)::after { display: none; }
.tab-active { background: #1a365d; border-radius: 10px 10px 0 0; margin: 0 -2px; width: 275.250px; padding-left: 17px; padding-right: 15px; }
.tab-ico { width: 20px; height: 20px; flex: none; margin-right: 10.500px; }
.tab-ico-u { width: 22px; height: 24px; margin-right: 9.500px; }
.tab-plain { padding-left: 16px; }
.tab-title { flex: 1; overflow: hidden; }
.tab-fade { -webkit-mask-image: linear-gradient(to right, #000 calc(100% - 26px), transparent calc(100% - 6px)); mask-image: linear-gradient(to right, #000 calc(100% - 26px), transparent calc(100% - 6px)); }
.tab-x { width: 10px; height: 10px; flex: none; margin-left: 10px; }
.newtab { width: 15px; height: 15px; margin: 14px 0 0 21px; }
.winbtns { margin-left: auto; display: flex; gap: 43px; padding: 14px 21px 0 0; height: 28px; }
.winbtns svg { width: 14px; height: 14px; }

/* toolbar */
.toolbar { height: 42px; padding-top: 3px; background: #1a365d; display: flex; align-items: center; }
.navbtns { width: 176px; flex: none; display: flex; gap: 24px; padding-left: 19px; }
.navbtns svg { width: 16px; height: 16px; }
.omnibox { width: 1488px; flex: none; height: 35px; background: #202124; border-radius: 18px; display: flex; align-items: center; padding: 0 11px 0 16px; }
.lock { width: 11px; height: 15px; flex: none; margin-right: 15px; }
.url { flex: 1; font-family: "Open Sans", sans-serif; font-size: 16.800px; color: #8b8f94; white-space: nowrap; overflow: hidden; }
.url-host { color: #fff; font-size: 16.450px; }
.star { width: 20px; height: 20px; flex: none; }
.exts { flex: 1; display: flex; align-items: center; padding-left: 19px; gap: 20px; }
.ext { width: 20px; height: 20px; flex: none; position: relative; display: block; }
.ext-swirl svg { width: 20px; height: 20px; display: block; }
.ext-badge { position: absolute; left: 8px; top: 12px; width: 14px; height: 15px; background: #4f6ee8; color: #fff; font: 700 11px/15px "Open Sans", sans-serif; text-align: center; border-radius: 2px; }
.avatar { width: 28px; height: 28px; margin: 0 -4px; flex: none; border-radius: 50%; background: #5d4037; color: #fff; font: 12px/28px "Open Sans", sans-serif; text-align: center; }
.dots { width: 4px; height: 16px; margin-left: 10px; }

/* bookmarks */
.bookmarks { height: 45px; background: #1a365d; border-bottom: 2px solid #14294a; display: flex; align-items: center; padding: 0 0 1px 9px; font-family: "Open Sans", sans-serif; font-size: 14.300px; color: #fff; white-space: nowrap; }
.bm { display: flex; align-items: center; gap: 11px; padding: 0 10px; flex: none; }
.bm-apps { padding-left: 9px; }
.bm-apps .bm-ico { width: 18px; height: 18px; }
.bm-ico { width: 20px; height: 20px; flex: none; }
.bm-folder { margin-left: 10px; gap: 12px; }
.bm-folder .bm-ico { width: 16px; }
.bm-more { margin-left: auto; padding-right: 24px; font-size: 15px; color: #c5cfdd; }
.tds { width: 20px; height: 20px; background: #2f5373; color: #d6e0ea; font: 700 7px/20px "DejaVu Sans Mono", monospace; text-align: center; display: block; }
.free { width: 20px; height: 20px; background: #fff; color: #d92020; font: italic 700 9px/13px "Liberation Serif", serif; text-align: center; overflow: hidden; display: block; }
.tee { width: 20px; height: 20px; background: #fff; color: #111; font: 700 14px/20px "Liberation Sans", sans-serif; text-align: center; display: block; }
.tr { width: 20px; height: 20px; background: #0d1b38; border: 1px solid #3e93d8; color: #fff; font: 700 10px/18px "Liberation Sans", sans-serif; text-align: center; display: block; }
.mm { width: 20px; height: 20px; border: 3px solid #45c0d0; border-radius: 50%; background: #45c0d0; color: #fff; font: 10px/14px "Liberation Sans", sans-serif; text-align: center; display: block; }
.rr { width: 20px; height: 20px; border-radius: 5px; background: #231a63; color: #fff; font: italic 700 14px/20px "Liberation Sans", sans-serif; text-align: center; display: block; }

/* AWS nav */
.awsnav { height: 50px; background: #232f3e; display: flex; align-items: center; color: #fff; flex: none; }
.aws-logo { width: 50px; margin-left: 76px; margin-right: 69px; position: relative; height: 36px; flex: none; }
.aws-word { font: 31px/26px "Lato", sans-serif; display: block; text-align: center; letter-spacing: -1px; position: relative; top: 0; }
.aws-smile { position: absolute; left: 0; top: 23px; width: 50px; height: 12px; }
.nav-main { font: 700 18.700px/24px "Liberation Sans", sans-serif; }
.nav-chev { width: 10px; height: 6px; margin: 3px 0 0 15px; color: #aab7b8; flex: none; }
.nav-rg { margin-left: 37px; letter-spacing: .1px; }
.pin { width: 17px; height: 19px; margin-left: 40px; }
.nav-right { margin-left: auto; display: flex; align-items: center; font-size: 16.400px; padding-top: 2px; }
.bell { width: 20px; height: 24px; margin-right: 35px; }
.nav-item { display: flex; align-items: center; white-space: nowrap; }
.nav-tri { width: 9px; height: 5px; margin-left: 10px; color: #aab7b8; }
.nav-user { margin-right: 32px; }
.nav-region { margin-right: 31px; }
.nav-support { margin-right: 74px; }

/* work area */
.work { flex: 1; display: flex; min-height: 0; }
.sidebar { width: 351px; flex: none; background: #fff; border-right: 1px solid #d5dbdb; box-shadow: 1px 0 1px #e6e8e8; font-size: 16.750px; }
.side-head { height: 76px; border-bottom: 1px solid #d5dbdb; display: flex; align-items: center; justify-content: space-between; padding: 0 29px 0 38px; margin-bottom: 12px; }
.side-title { font-size: 21.800px; font-weight: 600; line-height: 28px; margin-top: -1px; }
.side-x { width: 16px; height: 16px; margin-top: 1px; }
.side-list { list-style: none; margin: 0 37px; padding-bottom: 8.800px; }
.side-list li { line-height: 37.600px; height: 37.600px; white-space: nowrap; display: flex; align-items: center; padding-left: .5px; }
.side-first { padding-bottom: 9px; }
.side-group { border-top: 1px solid #d5dbdb; padding-top: 8.800px; }
.side-first + .side-group { padding-top: 6.600px; }
.side-on { color: #ec7211; font-weight: 700; }
.side-badge { width: 28px; height: 25px; margin-left: 4px; border-radius: 13px; background: #545b64; color: #fff; font-size: 13px; line-height: 25px; text-align: center; }

.main { flex: 1; min-width: 0; overflow: hidden; padding: 0 0 0 49px; font-size: 16.750px; }
.row { line-height: 29px; height: 31px; white-space: nowrap; }

.summary { width: 1449px; height: 144px; background: #fff; box-shadow: 0 1px 1px #879596, 1px 0 1px #c7cccc; padding-left: 25px; display: grid; grid-template-columns: 343px 356px 356px 1fr; }
.sum-cell { height: 131px; padding: 9.500px 0 0 12px; border-left: 1px solid #eaeded; }
.sum-first { padding-left: 0; border-left: 0; }
.sum-gap { margin-bottom: 19px; }
.meter-row { display: flex; align-items: center; }
.meter { width: 62px; height: 9px; border: 1px solid #bcc3c8; position: relative; display: block; flex: none; }
.meter-fill { position: absolute; left: 0; top: 0; bottom: 0; width: 3px; background: #4f7293; }
.meter-tick { position: absolute; left: 50px; top: -2px; height: 12px; width: 2px; background: #d13212; opacity: .75; }
.meter-txt { margin-left: 5px; font-size: 16px; }
.status { color: #1d8102; display: flex; align-items: center; }
.status-txt { margin-top: -2px; }
.ok { width: 20px; height: 20px; margin-right: 6px; }

.tabs { width: 1449px; display: flex; margin-top: 44px; padding: 0 0 19px 1px; border-bottom: 1px solid #aab7b8; height: 56px; }
.dtab { height: 36px; line-height: 36px; padding: 0 26px; border-right: 1px solid #aab7b8; font-weight: 700; font-size: 16.500px; color: #545b64; position: relative; white-space: nowrap; }
.dtab-last { border-right: 0; }
.dtab-on { color: #ec7211; padding: 0 24.500px; }
.dtab-on::after { content: ""; position: absolute; left: 0; right: -1px; top: 52px; height: 4px; background: #16191f; }

.card { width: 1449px; margin-top: 26px; background: #fff; box-shadow: 0 1px 1px #879596, 1px 0 1px #c7cccc; height: 600px; }
.card-head { height: 74px; line-height: 72px; padding-left: 26px; background: #fafafa; border-bottom: 1px solid #eaeded; font-size: 21.300px; font-weight: 600; }
.cols { display: grid; grid-template-columns: 337px 362px 362px 1fr; margin-top: 19px; height: 500px; padding-left: 26px; }
.col { border-left: 1px solid #eaeded; padding-left: 26px; }
.col:first-child { border-left: 0; padding-left: 0; }
.col-3 { padding-left: 25.500px; }
.col-4 { padding-left: 25px; }
.col-h { font-size: 21.600px; font-weight: 400; line-height: 22px; margin-bottom: 24.500px; white-space: nowrap; }
.col-h2 { margin-top: 35.600px; }
.col-h3 { margin-top: 35px; }
.kv { margin-bottom: 19px; }
.row-logs { margin-bottom: 3px; }
.link { color: #0073bb; }
.loglink { line-height: 25px; height: 25px; }

/* scrollbar */
.scrollbar { width: 19px; flex: none; background: #f1f1f1; display: flex; flex-direction: column; align-items: center; padding: 9px 0 0; }
.sb-arrow { width: 10px; height: 6px; flex: none; }
.sb-thumb { width: 17px; height: 340px; margin-top: 108px; background: #c1c1c1; }
.sb-down { margin-top: auto; margin-bottom: 9px; }

/* footer */
.footer { height: 36px; flex: none; background: #232f3e; display: flex; align-items: center; justify-content: flex-end; font-family: "Liberation Sans", sans-serif; font-size: 15px; color: #fff; padding-right: 40px; position: relative; white-space: nowrap; }
.foot-copy { color: #aab7b8; }
.foot-link { margin-left: 30px; }
.statusbubble { position: absolute; left: 0; top: 8px; width: 637px; height: 28px; background: #0a1b36; border-top-right-radius: 5px; padding-left: 6px; color: #e6ebf2; font: 14.300px/28px "Open Sans", sans-serif; }

/* taskbar */
.taskbar { height: 38px; flex: none; background: #40372c; display: flex; align-items: stretch; }
.tb { width: 46px; flex: none; display: flex; align-items: center; justify-content: center; position: relative; }
.tb svg { width: 20px; height: 20px; display: block; }
.tb-run::after { content: ""; position: absolute; left: 6px; right: 6px; bottom: 0; height: 3px; background: #8ae6e6; }
.tb-active { background: #6a6256; }
.tb-active::after { left: 0; right: 0; }
.tb-face { position: absolute; left: 24px; top: 19px; width: 11px; height: 12px; background: #3e4a5a; border-radius: 50% 50% 2px 2px; border: 1px solid #ddd; }
.tb-s { position: absolute; left: 24px; top: 18px; width: 13px; height: 13px; border-radius: 50%; background: #4e342e; color: #eee; font: 700 8px/13px "Open Sans", sans-serif; text-align: center; }
.tb-s-pink { background: #e91e63; }
.tray { margin-left: auto; display: flex; align-items: center; color: #fff; font-family: "Open Sans", sans-serif; font-size: 14px; padding-right: 31px; white-space: nowrap; }
.tray-bat { width: 20px; height: 15px; }
.tray-wifi { width: 20px; height: 18px; margin-left: 13px; }
.tray-vol { width: 18px; height: 18px; margin-left: 8px; }
.tray-eng { margin-left: 15px; }
.tray-time { margin-left: 22px; }
.tray-note { width: 20px; height: 22px; margin-left: 28px; }
```
